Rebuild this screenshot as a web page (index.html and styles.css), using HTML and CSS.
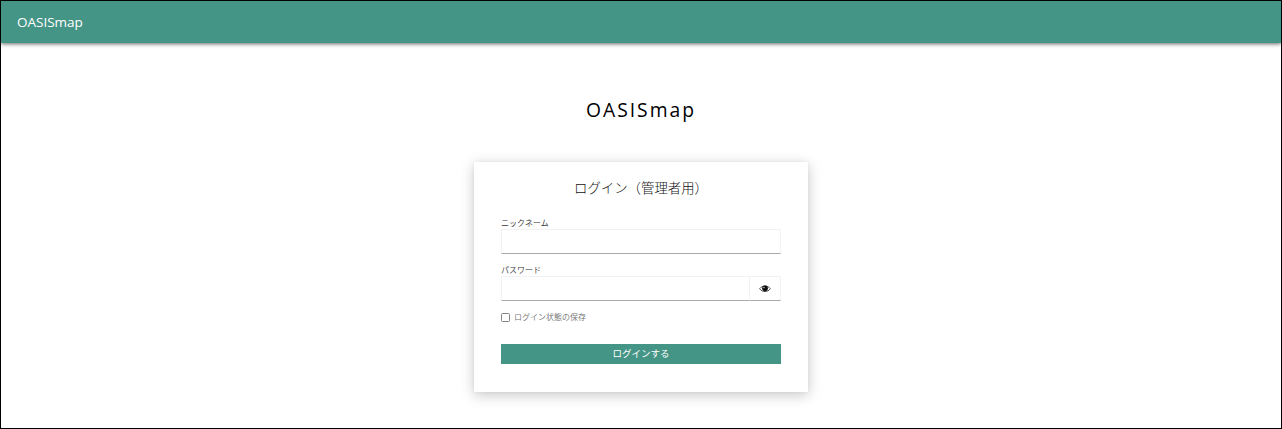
FILE: index.html
```html
<!DOCTYPE html>
<html lang="ja">
<head>
<meta charset="utf-8">
<title>OASISmap</title>
<link rel="stylesheet" href="styles.css">
</head>
<body>
<header class="topbar">OASISmap</header>
<main class="page">
  <h1 class="brand">OASISmap</h1>
  <section class="card">
    <h2 class="card-title">ログイン（管理者用）</h2>
    <form class="form">
      <label class="label" for="nickname">ニックネーム</label>
      <input class="input" id="nickname" type="text">
      <label class="label" for="password">パスワード</label>
      <div class="password-row">
        <input class="input" id="password" type="password">
        <button class="reveal" type="button" aria-label="パスワードを表示">
          <svg class="eye" viewBox="0 0 12 9">
            <path d="M.6 4.7C3.2 1.1 8.8 1.1 11.4 4.7 8.8 8.5 3.2 8.5.6 4.7Z" fill="#fff" stroke="#555" stroke-width="1"/>
            <circle cx="6" cy="4.3" r="2.9" fill="#111"/>
            <circle cx="4.9" cy="3.5" r=".7" fill="#ccc"/>
          </svg>
        </button>
      </div>
      <label class="remember"><input class="check" type="checkbox"><span>ログイン状態の保存</span></label>
      <button class="submit" type="button">ログインする</button>
    </form>
  </section>
</main>
</body>
</html>
```
FILE: styles.css
```css
* { box-sizing: border-box; }
body {
  margin: 0;
  height: 429px;
  overflow: hidden;
  border: 1px solid #000;
  background: #fff;
  color: #333;
  font-family: "Open Sans", "Noto Sans CJK JP", sans-serif;
}
.topbar {
  height: 42px;
  padding-left: 16px;
  background: #459586;
  color: #fff;
  font-size: 13.5px;
  line-height: 42px;
  box-shadow: 0 1px 4px rgba(0, 0, 0, .6);
}
.page {
  display: flex;
  flex-direction: column;
  align-items: center;
}
.brand {
  margin: 52px 0 37px;
  color: #000;
  font-size: 19.3px;
  font-weight: 400;
  line-height: 30px;
  letter-spacing: 2px;
}
.card {
  width: 334px;
  height: 230px;
  padding: 16px 27px 0;
  background: #fff;
  box-shadow: 0 0 3px rgba(0, 0, 0, .05), 0 3px 13px rgba(0, 0, 0, .22);
}
.card-title {
  margin: 0 0 27px;
  color: #111;
  font-family: "Noto Sans CJK JP", sans-serif;
  font-size: 13.4px;
  font-weight: 300;
  line-height: 18px;
  text-align: center;
}
.form {
  display: flex;
  flex-direction: column;
  font-family: "Noto Sans CJK JP", sans-serif;
}
.label {
  height: 6px;
  font-size: 8px;
  font-weight: 350;
  line-height: 0;
}
.input {
  width: 100%;
  height: 25px;
  padding: 0 6px;
  border: 1px solid #f2f2f2;
  border-bottom-color: #aaa;
  border-radius: 0;
  outline: 0;
  background: #fff;
}
.form > .input { margin-bottom: 16px; }
.password-row {
  display: flex;
  height: 25px;
}
.password-row .input {
  flex: 1;
  min-width: 0;
  border-right: 0;
}
.reveal {
  display: flex;
  width: 32px;
  padding: 0;
  align-items: center;
  justify-content: center;
  border: 1px solid #f2f2f2;
  border-bottom-color: #aaa;
  background: #fff;
}
.eye { width: 12px; height: 9px; }
.remember {
  display: flex;
  height: 12px;
  margin-top: 10px;
  align-items: center;
  gap: 4px;
  color: #707070;
  font-size: 8px;
  font-weight: 350;
  line-height: 12px;
}
.check {
  width: 9px;
  height: 9px;
  margin: 1px 0 0;
  appearance: none;
  border: 1px solid #858585;
  border-radius: 1.5px;
  background: #fff;
}
.submit {
  height: 20px;
  margin-top: 21px;
  padding: 0 0 2px;
  border: 0;
  background: #459586;
  color: #fff;
  font-family: inherit;
  font-size: 9.5px;
  line-height: 18px;
}
```
